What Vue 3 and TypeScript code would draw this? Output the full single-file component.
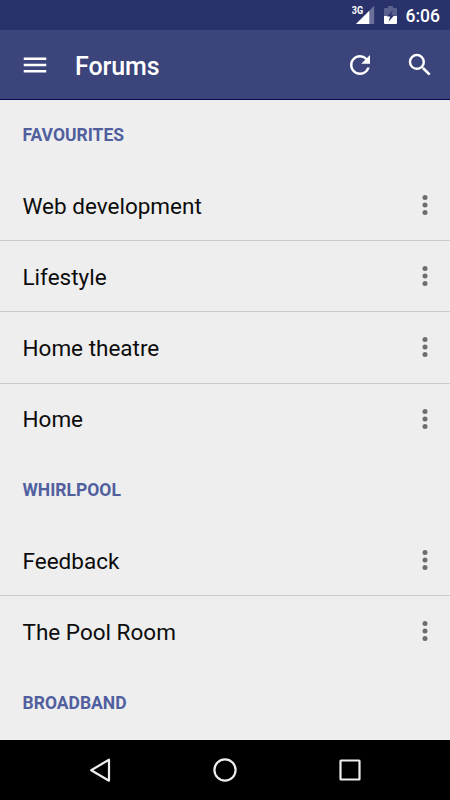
<script setup lang="ts">
interface Section {
  title: string
  forums: string[]
}

const sections: Section[] = [
  { title: 'FAVOURITES', forums: ['Web development', 'Lifestyle', 'Home theatre', 'Home'] },
  { title: 'WHIRLPOOL', forums: ['Feedback', 'The Pool Room'] },
  { title: 'BROADBAND', forums: [] },
]
</script>

<template>
  <div class="screen">
    <div class="status">
      <svg class="signal" width="24" height="20" viewBox="0 0 24 20">
        <path d="M22.2 1.8V20H4z" fill="#6a7099" />
        <path d="M17.3 6.7V20H4z" fill="#fff" />
        <text x="-0.2" y="9.8" class="network" textLength="11.4" lengthAdjust="spacingAndGlyphs">3G</text>
      </svg>
      <svg class="battery" width="13" height="18" viewBox="0 0 13 18">
        <path d="M4 0h5v2h3q1 0 1 1v7H0V3q0-1 1-1h3z" fill="#5a618f" />
        <path d="M0 10h13v7q0 1-1 1H1q-1 0-1-1z" fill="#fff" />
        <path d="M8.8 4.2L3 10.6h3.1L4.5 15.8l5.7-6.5H7.1z" fill="#29326b" />
      </svg>
      <span class="clock">6:06</span>
    </div>
    <header class="toolbar">
      <svg class="icon" viewBox="0 0 24 24"><path d="M3 18h18v-2H3v2zm0-5h18v-2H3v2zm0-7v2h18V6H3z" /></svg>
      <h1 class="title">Forums</h1>
      <svg class="icon" viewBox="0 0 24 24"><path d="M17.65 6.35A7.958 7.958 0 0 0 12 4c-4.42 0-7.99 3.58-7.99 8s3.57 8 7.99 8c3.73 0 6.84-2.55 7.73-6h-2.08A5.99 5.99 0 0 1 12 18c-3.31 0-6-2.69-6-6s2.69-6 6-6c1.66 0 3.14.69 4.22 1.78L13 11h7V4l-2.35 2.35z" /></svg>
      <svg class="icon search" viewBox="0 0 24 24"><path d="M15.5 14h-.79l-.28-.27A6.471 6.471 0 0 0 16 9.5 6.5 6.5 0 1 0 9.5 16c1.61 0 3.09-.59 4.23-1.57l.27.28v.79l5 4.99L20.49 19l-4.99-5zm-6 0C7.01 14 5 11.99 5 9.5S7.01 5 9.5 5 14 7.01 14 9.5 11.99 14 9.5 14z" /></svg>
    </header>
    <main class="list">
      <section v-for="section in sections" :key="section.title" class="section">
        <h2 class="heading">{{ section.title }}</h2>
        <div v-for="forum in section.forums" :key="forum" class="row">
          <span>{{ forum }}</span>
          <svg class="more" viewBox="0 0 24 24">
            <circle cx="12" cy="6" r="2" /><circle cx="12" cy="12" r="2" /><circle cx="12" cy="18" r="2" />
          </svg>
        </div>
      </section>
    </main>
    <nav class="navbar">
      <svg viewBox="0 0 30 30"><path d="M24 4.7v21L6.2 15.2z" /></svg>
      <svg viewBox="0 0 30 30"><circle cx="15" cy="15" r="10.6" /></svg>
      <svg viewBox="0 0 30 30"><rect x="5.5" y="5.5" width="19" height="19" rx="0.5" /></svg>
    </nav>
  </div>
</template>

<style>
body {
  margin: 0;
}
</style>

<style scoped>
.screen {
  display: flex;
  flex-direction: column;
  width: 450px;
  height: 800px;
  overflow: hidden;
  background: #eee;
  font-family: Roboto, sans-serif;
}
.status {
  display: flex;
  flex: none;
  justify-content: flex-end;
  box-sizing: border-box;
  height: 30px;
  padding-right: 10px;
  background: #29326b;
  color: #fff;
}
.signal {
  margin: 4px 8px 0 0;
}
.network {
  fill: #fff;
  font-size: 10.5px;
  font-weight: 700;
}
.battery {
  margin: 6px 9px 0 0;
}
.clock {
  font-size: 17.5px;
  font-weight: 500;
  line-height: 32px;
}
.toolbar {
  display: flex;
  flex: none;
  align-items: center;
  box-sizing: border-box;
  height: 70px;
  padding: 0 15px 0 20px;
  border-bottom: 1px solid #07094e;
  background: #3b447b;
}
.icon {
  flex: none;
  width: 30px;
  height: 30px;
  fill: #fff;
}
.search {
  margin-left: 30px;
}
.title {
  flex: 1;
  margin: 4px 0 0 25px;
  color: #fff;
  font-size: 25px;
  font-weight: 500;
  letter-spacing: -0.1px;
  line-height: 30px;
}
.list {
  flex: 1;
  min-height: 0;
  overflow: hidden;
}
.section + .section {
  margin-top: 1.25px;
}
.heading {
  height: 70px;
  margin: 0;
  padding-left: 22.5px;
  color: #515f9f;
  font-size: 17.5px;
  font-weight: 700;
  line-height: 71px;
}
.row {
  display: flex;
  align-items: center;
  justify-content: space-between;
  height: 70px;
  padding: 0 10px 0 22.5px;
  color: #0c0c0c;
  font-size: 22.5px;
  line-height: 30px;
}
.row span {
  padding-top: 1.5px;
}
.row + .row {
  height: 70.25px;
  border-top: 1px solid #c9c9c9;
}
.more {
  width: 30px;
  height: 30px;
  fill: #6d6d6d;
}
.navbar {
  display: flex;
  flex: none;
  align-items: center;
  justify-content: center;
  gap: 95px;
  height: 60px;
  background: #000;
}
.navbar svg {
  width: 30px;
  height: 30px;
  fill: none;
  stroke: #eee;
  stroke-width: 2.2;
  stroke-linejoin: round;
}
</style>
